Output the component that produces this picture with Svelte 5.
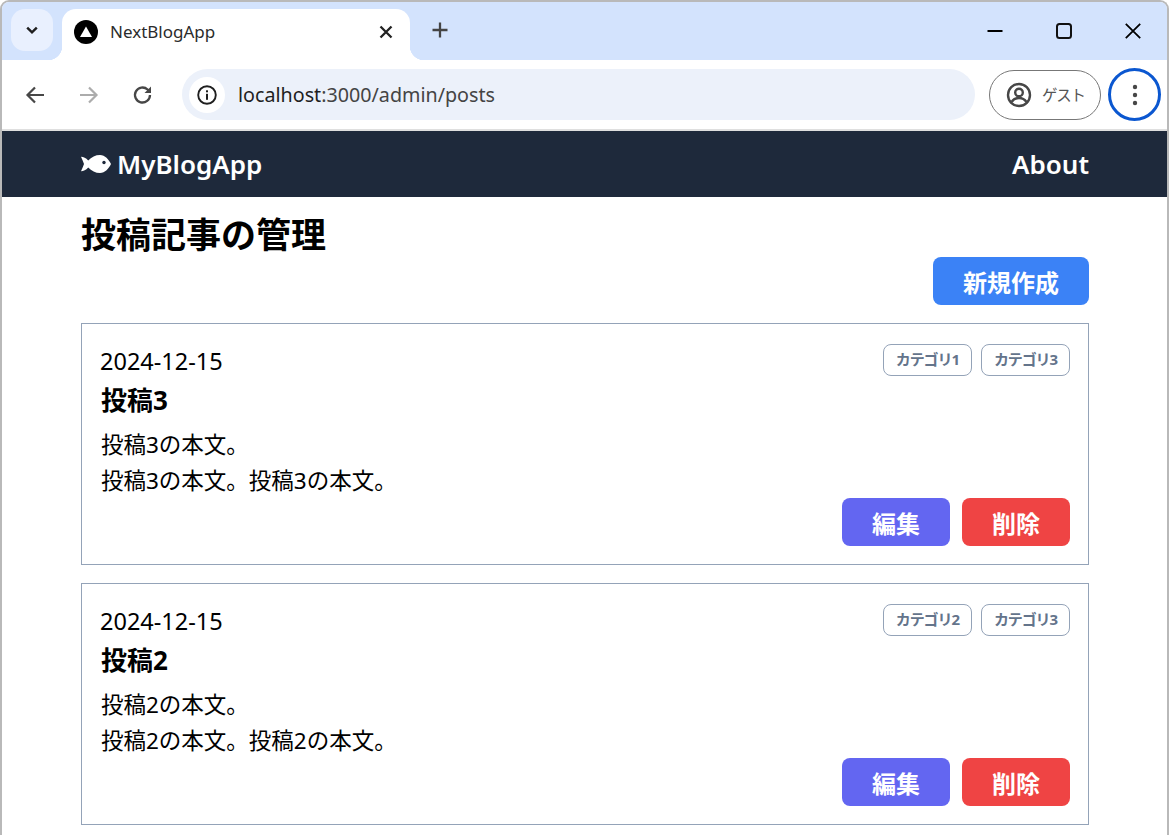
<script lang="ts">
  const posts = [
    { id: 3, date: "2024-12-15", cats: ["カテゴリ1", "カテゴリ3"] },
    { id: 2, date: "2024-12-15", cats: ["カテゴリ2", "カテゴリ3"] },
  ];
</script>

<div class="window">
  <!-- browser chrome -->
  <div class="tabstrip">
    <button class="tabsearch" aria-label="tabs">
      <svg width="14" height="14" viewBox="0 0 14 14"><path d="M2.200 4.600 7 9.400l4.800-4.800" fill="none" stroke="#1f1f1f" stroke-width="2.400"/></svg>
    </button>
    <div class="tab">
      <svg class="favicon" width="24" height="24" viewBox="0 0 24 24"><circle cx="12" cy="12" r="12" fill="#000"/><path d="M12 6.500 18 17H6z" fill="#fff"/></svg>
      <span class="tabtitle">NextBlogApp</span>
      <svg class="tabclose" width="14" height="14" viewBox="0 0 14 14"><path d="M1.500 1.500l11 11M12.500 1.500l-11 11" stroke="#222" stroke-width="2.300"/></svg>
    </div>
    <svg class="newtab" width="16" height="16" viewBox="0 0 16 16"><path d="M8 0.500v15M0.500 8h15" stroke="#444" stroke-width="2.300"/></svg>
    <div class="wincontrols">
      <svg width="16" height="16" viewBox="0 0 16 16"><path d="M0.500 8h15" stroke="#000" stroke-width="2"/></svg>
      <svg width="16" height="16" viewBox="0 0 16 16"><rect x="1" y="1" width="14" height="14" rx="2.500" fill="none" stroke="#111" stroke-width="2"/></svg>
      <svg width="16" height="16" viewBox="0 0 16 16"><path d="M0.800 0.800l14.400 14.400M15.200 0.800 0.800 15.200" stroke="#000" stroke-width="1.800"/></svg>
    </div>
  </div>

  <div class="toolbar">
    <svg class="navicon" width="22" height="22" viewBox="0 0 22 22"><path d="M20 11H4M11 3.500 3.500 11l7.500 7.500" fill="none" stroke="#474747" stroke-width="2.200"/></svg>
    <svg class="navicon" width="22" height="22" viewBox="0 0 22 22"><path d="M2 11h16M11 3.500l7.500 7.500-7.500 7.500" fill="none" stroke="#acacac" stroke-width="2.200"/></svg>
    <svg class="navicon" width="22" height="22" viewBox="0 0 22 22"><path d="M18 11a7.500 7.500 0 1 1-2.400-5.500L18 8" fill="none" stroke="#474747" stroke-width="2.300"/><path d="M19 2.500V9h-6.500z" fill="#474747"/></svg>
    <div class="omnibox">
      <span class="siteinfo">
        <svg width="20" height="20" viewBox="0 0 20 20"><circle cx="10" cy="10" r="8.800" fill="none" stroke="#1f1f1f" stroke-width="1.900"/><rect x="9" y="8.800" width="2" height="6" fill="#1f1f1f"/><rect x="9" y="5.300" width="2" height="2" fill="#1f1f1f"/></svg>
      </span>
      <span class="url"><span class="host">localhost</span>:3000/admin/posts</span>
    </div>
    <div class="guest">
      <svg width="26" height="26" viewBox="0 0 26 26"><circle cx="13" cy="13" r="11" fill="none" stroke="#474747" stroke-width="2.400"/><circle cx="13" cy="10.500" r="3.800" fill="none" stroke="#474747" stroke-width="2.400"/><path d="M5.500 20c2-3 5-4 7.500-4s5.500 1 7.500 4" fill="none" stroke="#474747" stroke-width="2.400"/></svg>
      <span>ゲスト</span>
    </div>
    <div class="menu">
      <svg width="6" height="22" viewBox="0 0 6 22"><circle cx="3" cy="3" r="2.200" fill="#474747"/><circle cx="3" cy="11" r="2.200" fill="#474747"/><circle cx="3" cy="19" r="2.200" fill="#474747"/></svg>
    </div>
  </div>

  <!-- page -->
  <header class="nav">
    <div class="nav-inner">
      <div class="brand">
        <svg width="30" height="20" viewBox="0 0 30 20"><path d="M0 2.800c2.500 0 5 1.200 7.200 3.700C10.500 3 14.500 1 19 1c5 0 8.800 4.500 11 9-2.200 4.500-6 9-11 9-4.500 0-8.500-2-11.800-5.500C5 16 2.500 17.200 0 17.200c1.200-2.500 2.200-4.800 3-7.200-.8-2.400-1.800-4.700-3-7.200z" fill="#fff"/><circle cx="23" cy="8.500" r="1.700" fill="#1e293b"/></svg>
        <span>MyBlogApp</span>
      </div>
      <span class="about">About</span>
    </div>
  </header>

  <main class="content">
    <h1>投稿記事の管理</h1>
    <div class="newrow"><button class="btn new">新規作成</button></div>
    {#each posts as post}
      <article class="card">
        <div class="meta">
          <span class="date">{post.date}</span>
          <div class="cats">
            {#each post.cats as cat}<span class="cat">{cat}</span>{/each}
          </div>
        </div>
        <h2>投稿{post.id}</h2>
        <p>投稿{post.id}の本文。<br />投稿{post.id}の本文。投稿{post.id}の本文。</p>
        <div class="actions">
          <button class="btn edit">編集</button>
          <button class="btn del">削除</button>
        </div>
      </article>
    {/each}
  </main>
</div>

<style>
  :global(body) {
    margin: 0;
    background: #fff;
    overflow: hidden;
  }
  .window {
    width: 1169px;
    height: 835px;
    box-sizing: border-box;
    border: solid #b9b9b9;
    border-width: 2px 2px 0 2px;
    border-radius: 9px 9px 0 0;
    overflow: hidden;
    font-family: "Noto Sans", "Noto Sans CJK JP", sans-serif;
    color: #000;
  }
  button {
    font-family: inherit;
    border: 0;
  }

  .tabstrip {
    height: 58px;
    background: #d3e3fd;
    display: flex;
    align-items: flex-start;
    padding-left: 9px;
  }
  .tabsearch {
    width: 42px;
    height: 42px;
    margin-top: 7px;
    padding: 0;
    border-radius: 14px;
    background: #e9f0fe;
    display: flex;
    align-items: center;
    justify-content: center;
  }
  .tab {
    width: 348px;
    height: 51px;
    margin: 7px 0 0 9px;
    padding: 0 17px 6px 12px;
    box-sizing: border-box;
    background: #fff;
    border-radius: 14px 14px 0 0;
    display: flex;
    align-items: center;
    gap: 12px;
    position: relative;
  }
  /* concave flares where the tab meets the toolbar */
  .tab::before,
  .tab::after {
    content: "";
    position: absolute;
    bottom: 0;
    width: 14px;
    height: 14px;
  }
  .tab::before {
    left: -14px;
    background: radial-gradient(circle at 0 0, transparent 14px, #fff 14.500px);
  }
  .tab::after {
    right: -14px;
    background: radial-gradient(circle at 100% 0, transparent 14px, #fff 14.500px);
  }
  .tabtitle {
    flex: 1;
    font-size: 17px;
    color: #2b2b2b;
    font-family: "Noto Sans", sans-serif;
  }
  .newtab {
    margin: 20px 0 0 22px;
  }
  .wincontrols {
    margin-left: auto;
    display: flex;
    gap: 53px;
    padding: 21px 26px 0 0;
  }

  .toolbar {
    height: 69px;
    background: #fff;
    border-radius: 12px 12px 0 0;
    border-bottom: 2px solid #dfdfdf;
    display: flex;
    align-items: center;
    padding-left: 22px;
  }
  .navicon {
    margin-right: 32px;
    flex: none;
  }
  .navicon:nth-of-type(3) {
    margin-right: 28px;
  }
  .omnibox {
    width: 793px;
    height: 51px;
    border-radius: 26px;
    background: #ecf1fa;
    display: flex;
    align-items: center;
    padding-left: 7px;
    box-sizing: border-box;
  }
  .siteinfo {
    width: 36px;
    height: 36px;
    border-radius: 50%;
    background: #fff;
    display: flex;
    align-items: center;
    justify-content: center;
    margin-right: 13px;
  }
  .url {
    font-size: 19.700px;
    color: #444;
  }
  .host {
    color: #1f1f1f;
  }
  .guest {
    width: 112px;
    height: 50px;
    margin-left: 14px;
    box-sizing: border-box;
    border: 1.500px solid #777;
    border-radius: 25px;
    display: flex;
    align-items: center;
    gap: 10px;
    padding-left: 16px;
    font-size: 15.500px;
    letter-spacing: -1.200px;
    color: #555;
  }
  .menu {
    width: 53px;
    height: 53px;
    margin-left: 7px;
    flex: none;
    box-sizing: border-box;
    border: 3px solid #0b57d0;
    border-radius: 50%;
    display: flex;
    align-items: center;
    justify-content: center;
  }

  .nav {
    height: 66px;
    background: #1e293b;
    color: #fff;
  }
  .nav-inner {
    width: 1008px;
    height: 100%;
    margin-left: 79px;
    display: flex;
    align-items: center;
    justify-content: space-between;
    font-size: 26px;
    font-weight: 600;
  }
  .brand {
    display: flex;
    align-items: center;
    gap: 6px;
  }

  .content {
    width: 1008px;
    margin-left: 79px;
  }
  h1 {
    margin: 0;
    height: 60px;
    line-height: 76px;
    font-size: 35px;
    font-weight: 700;
  }
  .newrow {
    display: flex;
    justify-content: flex-end;
    margin-bottom: 18px;
  }
  .btn {
    height: 48px;
    border-radius: 8px;
    color: #fff;
    font-size: 24px;
    font-weight: 700;
    padding: 0;
  }
  .new {
    width: 156px;
    background: #3b82f6;
  }
  .card {
    height: 242px;
    box-sizing: border-box;
    border: 1px solid #94a3b8;
    margin-bottom: 18px;
    padding: 20px 18px 0 19px;
  }
  .meta {
    display: flex;
    justify-content: space-between;
    align-items: center;
    height: 34px;
  }
  .date {
    font-size: 23.500px;
    margin-left: -1px;
  }
  .cats {
    display: flex;
    gap: 9px;
    margin-top: -2px;
  }
  .cat {
    height: 32px;
    line-height: 29px;
    box-sizing: border-box;
    border: 1px solid #94a3b8;
    border-radius: 8px;
    padding: 0 12px;
    font-size: 15px;
    letter-spacing: -1.100px;
    font-weight: 700;
    color: #64748b;
  }
  h2 {
    margin: 4px 0 0;
    font-size: 26px;
    line-height: 36px;
    font-weight: 700;
  }
  p {
    margin: 9px 0 0;
    font-size: 22.500px;
    line-height: 36px;
  }
  .actions {
    margin-top: -1px;
    display: flex;
    justify-content: flex-end;
    gap: 12px;
  }
  .edit, .del {
    width: 108px;
  }
  .edit {
    background: #6366f1;
  }
  .del {
    background: #ef4444;
  }
</style>
